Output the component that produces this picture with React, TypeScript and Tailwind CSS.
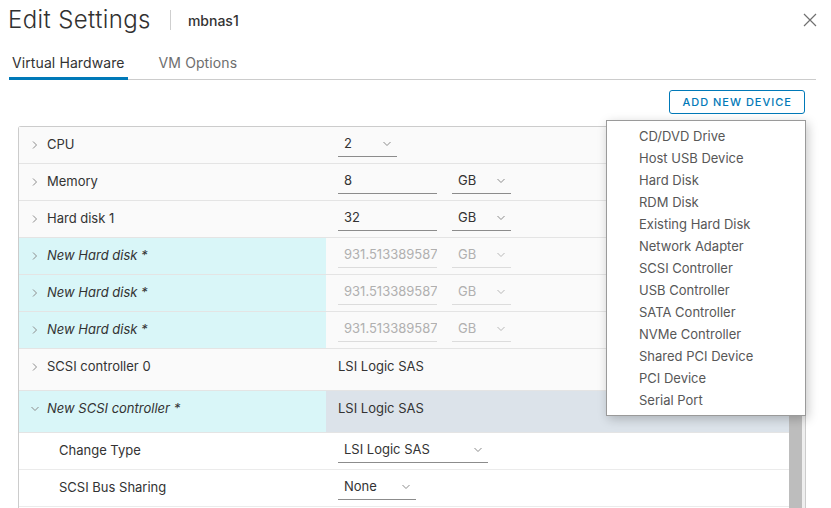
import React from 'react';

const FONT = { fontFamily: 'Inter, "Open Sans", sans-serif' };

const ChevronRight = () => (
  <svg width="8" height="10" viewBox="0 0 8 10" className="shrink-0">
    <path d="M2 1.5 L5.5 5 L2 8.5" fill="none" stroke="#8c8c8c" strokeWidth="1" />
  </svg>
);

const ChevronDown = ({ color = '#8c8c8c' }: { color?: string }) => (
  <svg width="10" height="8" viewBox="0 0 10 8" className="shrink-0">
    <path d="M1.5 2 L5 5.5 L8.5 2" fill="none" stroke={color} strokeWidth="1" />
  </svg>
);

const Select = ({
  value,
  width,
  disabled = false,
}: {
  value: string;
  width: string;
  disabled?: boolean;
}) => (
  <div
    className={`${width} h-[23px] flex items-center justify-between pl-[6px] pr-[5px] pb-[2px] border-b ${
      disabled ? 'border-[#dcdcdc] text-[#b0b0b0]' : 'border-[#8c8c8c] text-[#333]'
    }`}
  >
    <span>{value}</span>
    <ChevronDown color={disabled ? '#b8b8b8' : '#8c8c8c'} />
  </div>
);

const TextInput = ({ value, disabled = false }: { value: string; disabled?: boolean }) => (
  <div
    className={`w-[99px] h-[23px] flex items-center pl-[6px] pb-[2px] border-b overflow-hidden whitespace-nowrap ${
      disabled ? 'border-[#dcdcdc] text-[#b0b0b0]' : 'border-[#8c8c8c] text-[#333]'
    }`}
  >
    {value}
  </div>
);

type Row = {
  label: string;
  isNew?: boolean;
  expanded?: boolean;
  tall?: boolean;
  child?: boolean;
  value: React.ReactNode;
};

const rows: Row[] = [
  { label: 'CPU', value: <Select value="2" width="w-[59px]" /> },
  {
    label: 'Memory',
    value: (
      <div className="flex gap-[15px]">
        <TextInput value="8" />
        <Select value="GB" width="w-[59px]" />
      </div>
    ),
  },
  {
    label: 'Hard disk 1',
    value: (
      <div className="flex gap-[15px]">
        <TextInput value="32" />
        <Select value="GB" width="w-[59px]" />
      </div>
    ),
  },
  ...[0, 1, 2].map(() => ({
    label: 'New Hard disk *',
    isNew: true,
    value: (
      <div className="flex gap-[15px]">
        <TextInput value="931.513389587" disabled />
        <Select value="GB" width="w-[59px]" disabled />
      </div>
    ),
  })),
  { label: 'SCSI controller 0', tall: true, value: <span className="text-[#333]">LSI Logic SAS</span> },
  {
    label: 'New SCSI controller *',
    isNew: true,
    expanded: true,
    tall: true,
    value: <span className="text-[#333]">LSI Logic SAS</span>,
  },
  { label: 'Change Type', child: true, value: <Select value="LSI Logic SAS" width="w-[150px]" /> },
  { label: 'SCSI Bus Sharing', child: true, value: <Select value="None" width="w-[78px]" /> },
  { label: '', child: true, value: null },
];

const devices = [
  'CD/DVD Drive',
  'Host USB Device',
  'Hard Disk',
  'RDM Disk',
  'Existing Hard Disk',
  'Network Adapter',
  'SCSI Controller',
  'USB Controller',
  'SATA Controller',
  'NVMe Controller',
  'Shared PCI Device',
  'PCI Device',
  'Serial Port',
];

export default function App() {
  return (
    <div className="relative w-[831px] h-[508px] overflow-hidden bg-white text-[13px] text-[#333]" style={FONT}>
      {/* header */}
      <div className="h-[40px] flex items-center pl-[8px] pr-[14px]">
        <h1 className="text-[24px] font-light tracking-[0.4px] text-[#313131] leading-none">Edit Settings</h1>
        <div className="w-px h-[20px] bg-[#cfcfcf] ml-[19px] mr-[17px]" />
        <span className="text-[14px] font-medium text-[#333]">mbnas1</span>
        <svg width="14" height="14" viewBox="0 0 14 14" className="ml-auto">
          <path d="M1 1 L13 13 M13 1 L1 13" stroke="#707070" strokeWidth="1.2" />
        </svg>
      </div>

      {/* tabs */}
      <div className="mt-[4px] ml-[9px] w-[807px] h-[36px] flex border-b border-[#cccccc]">
        <div className="px-[3px] flex items-center border-b-[3px] border-[#0079b8] -mb-px pt-[3px] text-[14px] tracking-[0.1px] text-[#333]">
          Virtual Hardware
        </div>
        <div className="ml-[28px] px-[3px] flex items-center pt-[2px] text-[14px] tracking-[0.1px] text-[#6e6e6e]">
          VM Options
        </div>
      </div>

      {/* toolbar */}
      <div className="flex justify-end pr-[26px] mt-[10px]">
        <button className="h-[24px] px-[12px] border border-[#0079b8] rounded-[3px] text-[11px] tracking-[1px] text-[#0079b8] font-medium">
          ADD NEW DEVICE
        </button>
      </div>

      {/* table */}
      <div className="mt-[12px] ml-[18px] w-[788px] flex border border-b-0 border-[#cccccc] rounded-tl-[3px]">
        <div className="w-[770px] flex flex-col">
          {rows.map((r, i) => (
            <div
              key={i}
              className={`flex border-b ${r.tall ? 'h-[42px]' : 'h-[37px]'} ${
                r.child ? 'bg-white border-[#ebebeb]' : 'bg-[#fafafa] border-[#e4e4e4]'
              }`}
            >
              <div
                className={`w-[307px] flex items-start ${r.isNew ? 'bg-[#d9f6f8]' : ''} ${
                  r.child ? 'pl-[40px]' : 'pl-[11px]'
                }`}
              >
                <div className="h-[36px] flex items-center">
                  {!r.child &&
                    (r.expanded ? (
                      <ChevronDown />
                    ) : (
                      <span className="ml-[1px] mr-[1px] flex">
                        <ChevronRight />
                      </span>
                    ))}
                  <span className={`${r.child ? '' : 'ml-[7px]'} ${r.isNew ? 'italic' : ''} text-[#333]`}>
                    {r.label}
                  </span>
                </div>
              </div>
              <div className={`flex-1 flex items-start pl-[12px] ${r.expanded ? 'bg-[#dce3ea]' : ''}`}>
                <div className="h-[36px] flex items-center">{r.value}</div>
              </div>
            </div>
          ))}
        </div>
        <div className="w-[16px] bg-[#efefef] flex justify-start">
          <div className="w-[13px] mt-[260px] h-full bg-[#bdbdbd]" />
        </div>
      </div>

      {/* add device dropdown */}
      <div className="absolute left-[606px] top-[120px] w-[200px] border border-[#9a9a9a] bg-white pt-[5px] pb-[3px] shadow-[2px_3px_10px_rgba(0,0,0,0.22)]">
        {devices.map((d) => (
          <div key={d} className="h-[22px] flex items-center pl-[32px] text-[13px] text-[#575757]">
            {d}
          </div>
        ))}
      </div>
    </div>
  );
}
